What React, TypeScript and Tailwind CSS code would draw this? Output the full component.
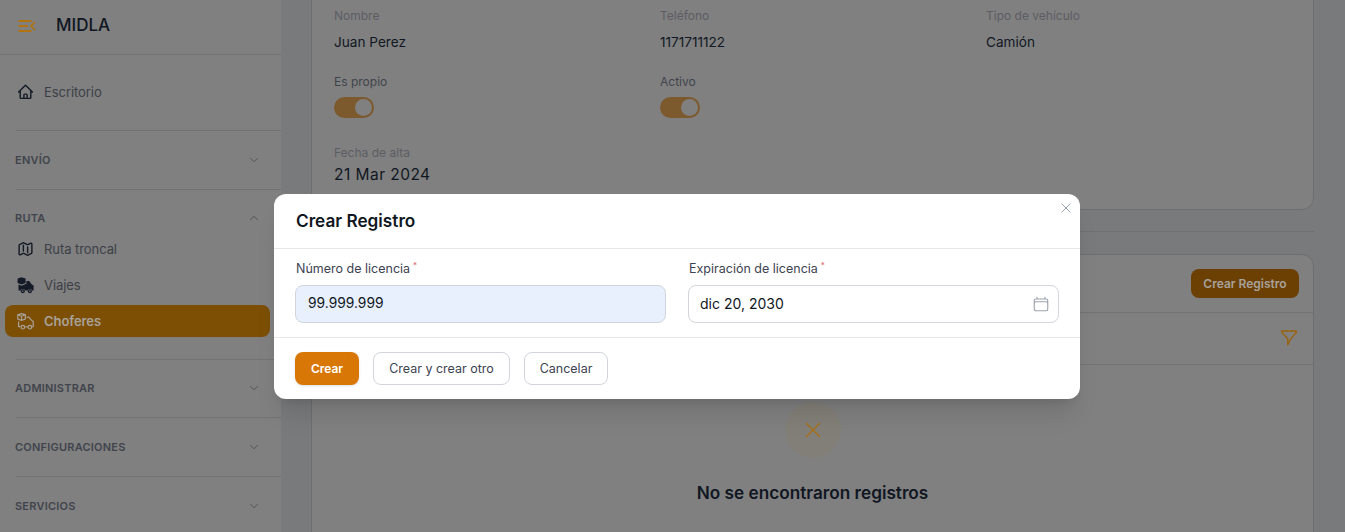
import { HiOutlineCalendar, HiOutlineHome, HiOutlineMap, HiOutlineXMark } from "react-icons/hi2";
import { ChevronDown, ChevronUp, X } from "lucide-react";

const FONT = "font-['Inter','Liberation_Sans',sans-serif]";

const MenuLogo = () => (
  <svg width="18" height="12" viewBox="0 0 18 12" fill="none" stroke="#b0730f" strokeWidth="2">
    <path d="M0.5 1h13M0.5 6h9.5M0.5 11h13" />
    <path d="M17 2 13 6l4 4" strokeWidth="1.7" />
  </svg>
);

const SolidTruck = () => (
  <svg width="17" height="17" viewBox="0 0 17 17" fill="#141b26">
    <path d="M4.5 0.3 8.6 1.4 8.6 6 4.5 7.6 0.6 6 0.6 1.4z" />
    <path d="M9.4 4h2.8l2.6 3.6 1.8 1V13.5h-1.4a2.4 2.4 0 0 0-4.4 0H8a2.4 2.4 0 0 0-4.4 0H1.5V7.4l3 1.3 4.9-1.9z" />
    <circle cx="5.8" cy="14.2" r="2" />
    <circle cx="12.9" cy="14.2" r="2" />
    <circle cx="5.8" cy="14.2" r="0.7" fill="#808080" />
    <circle cx="12.9" cy="14.2" r="0.7" fill="#808080" />
  </svg>
);

const OutlineTruck = () => (
  <svg width="17" height="17" viewBox="0 0 17 17" fill="none" stroke="#a8a29a" strokeWidth="1.2">
    <path d="M4.5 0.7 8.3 1.8 8.3 6 4.5 7.4 0.8 6 0.8 1.8z" />
    <path d="M0.8 1.8 4.5 3.2 8.3 1.8M4.5 3.2v4.2" />
    <path d="M9.6 4.2h2.2l2.8 3.2 1.6 1V13.6h-1M1.6 8.5v5.1H3.4M8.2 13.8h2.4" />
    <circle cx="5.8" cy="14.2" r="1.8" />
    <circle cx="12.9" cy="14.2" r="1.8" />
  </svg>
);

const FunnelIcon = () => (
  <svg width="16" height="16" viewBox="0 0 16 16" fill="none" stroke="#9a6108" strokeWidth="1.3" strokeLinejoin="round">
    <path d="M0.7 1H15.3V2.4L9.8 8.8 6.8 15V8.8L0.7 2.4Z" />
  </svg>
);

const GroupRow = ({ label, open }: { label: string; open?: boolean }) => (
  <div className="flex h-[20px] items-center justify-between pl-[15px] pr-[20px]">
    <span className="text-[11px] font-semibold tracking-[0.02em] text-[#41444c]">{label}</span>
    {open ? (
      <ChevronUp size={14} strokeWidth={1.5} className="text-[#4b4e55]" />
    ) : (
      <ChevronDown size={14} strokeWidth={1.5} className="text-[#4b4e55]" />
    )}
  </div>
);

const NavItem = ({ icon, label, active }: { icon: React.ReactNode; label: string; active?: boolean }) => (
  <div
    className={`mx-[5px] flex h-[32px] w-[265px] items-center gap-[10px] rounded-lg pl-[12px] text-[13px] tracking-[-0.005em] ${
      active ? "bg-[#7c4f05] font-semibold text-[#a8a29a]" : "text-[#3c3f46]"
    }`}
  >
    <span className="flex w-[17px] justify-center">{icon}</span>
    <span className="pt-px">{label}</span>
  </div>
);

const Sidebar = () => (
  <aside className="flex h-[532px] w-[281px] shrink-0 flex-col bg-[#808080] shadow-[4px_0_10px_rgba(0,0,0,0.06)]">
    <div className="flex h-[55px] items-center gap-[20px] border-b border-[#727374] pb-[2px] pl-[18px]">
      <MenuLogo />
      <span className="text-[17px] font-medium text-[#101722]">MIDLA</span>
    </div>
    <div className="pt-[21px]">
      <NavItem label="Escritorio" icon={<HiOutlineHome size={18} strokeWidth={2} className="text-[#141b26]" />} />
    </div>
    <div className="ml-4 mt-[22px] border-t border-[#727374]" />
    <div className="pt-[19px]">
      <GroupRow label="ENVÍO" />
    </div>
    <div className="ml-4 mt-[19px] border-t border-[#727374]" />
    <div className="pt-[18px]">
      <GroupRow label="RUTA" open />
    </div>
    <div className="mt-[5px] flex flex-col gap-[4px]">
      <NavItem label="Ruta troncal" icon={<HiOutlineMap size={18} strokeWidth={2} className="text-[#141b26]" />} />
      <NavItem label="Viajes" icon={<SolidTruck />} />
      <NavItem label="Choferes" active icon={<OutlineTruck />} />
    </div>
    <div className="ml-4 mt-[22px] border-t border-[#727374]" />
    <div className="pt-[18px]">
      <GroupRow label="ADMINISTRAR" />
    </div>
    <div className="ml-4 mt-[19px] border-t border-[#727374]" />
    <div className="pt-[19px]">
      <GroupRow label="CONFIGURACIONES" />
    </div>
    <div className="ml-4 mt-[19px] border-t border-[#727374]" />
    <div className="pt-[19px]">
      <GroupRow label="SERVICIOS" />
    </div>
  </aside>
);

const Field = ({ label, value }: { label: string; value: string }) => (
  <div className="flex flex-col">
    <span className="text-[12px] leading-[16px] text-[#5c5d62]">{label}</span>
    <span className="mt-[9px] text-[13.6px] leading-[18px] text-[#101722]">{value}</span>
  </div>
);

const Toggle = () => (
  <div className="flex h-[21px] w-[40px] items-center justify-end rounded-full bg-[#7d5a2e] pr-[2px]">
    <div className="h-[17px] w-[17px] rounded-full bg-[#808080]" />
  </div>
);

const Main = () => (
  <main className="h-[532px] flex-1 overflow-hidden bg-[#797a7c] pl-[30px] pr-[31px]">
    <section className="-mt-[20px] h-[230px] rounded-b-xl border border-[#6d6e70] bg-[#808080] pl-[22px] pt-[27px]">
      <div className="grid grid-cols-[326px_326px_1fr]">
        <Field label="Nombre" value="Juan Perez" />
        <Field label="Teléfono" value="1171711122" />
        <Field label="Tipo de vehículo" value="Camión" />
      </div>
      <div className="mt-[17px] grid grid-cols-[326px_326px_1fr]">
        <div>
          <span className="text-[12px] leading-[16px] text-[#41444c]">Es propio</span>
          <div className="mt-[5px]">
            <Toggle />
          </div>
        </div>
        <div>
          <span className="text-[12px] leading-[16px] text-[#41444c]">Activo</span>
          <div className="mt-[5px]">
            <Toggle />
          </div>
        </div>
      </div>
      <div className="mt-[27px] text-[12px] leading-[16px] text-[#5c5d62]">Fecha de alta</div>
      <div className="mt-[4px] text-[15.5px] leading-[20px] tracking-[0.03em] text-[#101722]">21 Mar 2024</div>
    </section>
    <div className="mt-[21px] border-t border-[#6f7072]" />
    <section className="mt-[22px] h-[320px] rounded-t-xl border border-[#6d6e70] bg-[#808080]">
      <div className="flex h-[58px] items-center justify-end border-b border-[#727374] pr-[14px]">
        <button className="h-[29px] w-[108px] rounded-lg bg-[#6c3f02] text-[12px] font-semibold text-[#a8a29a]">
          Crear Registro
        </button>
      </div>
      <div className="flex h-[52px] items-center justify-end border-b border-[#727374] pb-[2px] pr-[16px]">
        <FunnelIcon />
      </div>
      <div className="flex flex-col items-center pt-[37px]">
        <div className="flex h-[56px] w-[56px] items-center justify-center rounded-full bg-[#827f78]">
          <X size={26} strokeWidth={1.2} className="text-[#a86f12]" />
        </div>
        <div className="mt-[22px] text-[17.2px] font-semibold text-[#101722]">No se encontraron registros</div>
      </div>
    </section>
  </main>
);

const FormLabel = ({ children }: { children: string }) => (
  <div className="flex h-[16px] items-start pl-px text-[12.5px] leading-[16px] text-[#3d4352]">
    {children}
    <span className="ml-[3px] text-[8px] leading-[8px] text-[#e0606a]">*</span>
  </div>
);

const Modal = () => (
  <div className="absolute inset-0">
    <div className="relative ml-[274px] mt-[194px] h-[205px] w-[806px] rounded-xl bg-white shadow-xl">
      <button className="absolute right-[6px] top-[6px] text-[#9ca3af]">
        <HiOutlineXMark size={16} />
      </button>
      <div className="flex h-[55px] items-center border-b border-[#e5e7eb] pb-px pl-[22px] text-[17.2px] font-semibold text-[#101722]">
        Crear Registro
      </div>
      <div className="grid h-[89px] grid-cols-2 gap-[22px] border-b border-[#e5e7eb] px-[21px] pt-[12px]">
        <div>
          <FormLabel>Número de licencia</FormLabel>
          <div className="mt-[8px] flex h-[38px] items-center rounded-lg border border-[#d1d5db] bg-[#e8f0fe] pb-[2px] pl-[12px] text-[13.8px] text-[#101722]">
            99.999.999
          </div>
        </div>
        <div>
          <FormLabel>Expiración de licencia</FormLabel>
          <div className="mt-[8px] flex h-[38px] items-center justify-between rounded-lg border border-[#d1d5db] pb-[2px] pl-[11px] pr-[8px] text-[14px] text-[#101722]">
            dic 20, 2030
            <HiOutlineCalendar size={18} className="mt-[2px] text-[#9ca3af]" />
          </div>
        </div>
      </div>
      <div className="flex gap-[14px] px-[21px] pt-[14px]">
        <button className="h-[33px] w-[64px] rounded-lg bg-[#d97706] text-[12px] font-semibold text-white shadow-sm">
          Crear
        </button>
        <button className="h-[33px] w-[137px] rounded-lg border border-[#d1d5db] pt-px text-[12.5px] text-[#3d4352]">
          Crear y crear otro
        </button>
        <button className="h-[33px] w-[84px] rounded-lg border border-[#d1d5db] pt-px text-[12.5px] text-[#3d4352]">
          Cancelar
        </button>
      </div>
    </div>
  </div>
);

export default function App() {
  return (
    <div className={`relative flex h-[532px] w-[1345px] overflow-hidden ${FONT}`}>
      <Sidebar />
      <Main />
      <Modal />
    </div>
  );
}
